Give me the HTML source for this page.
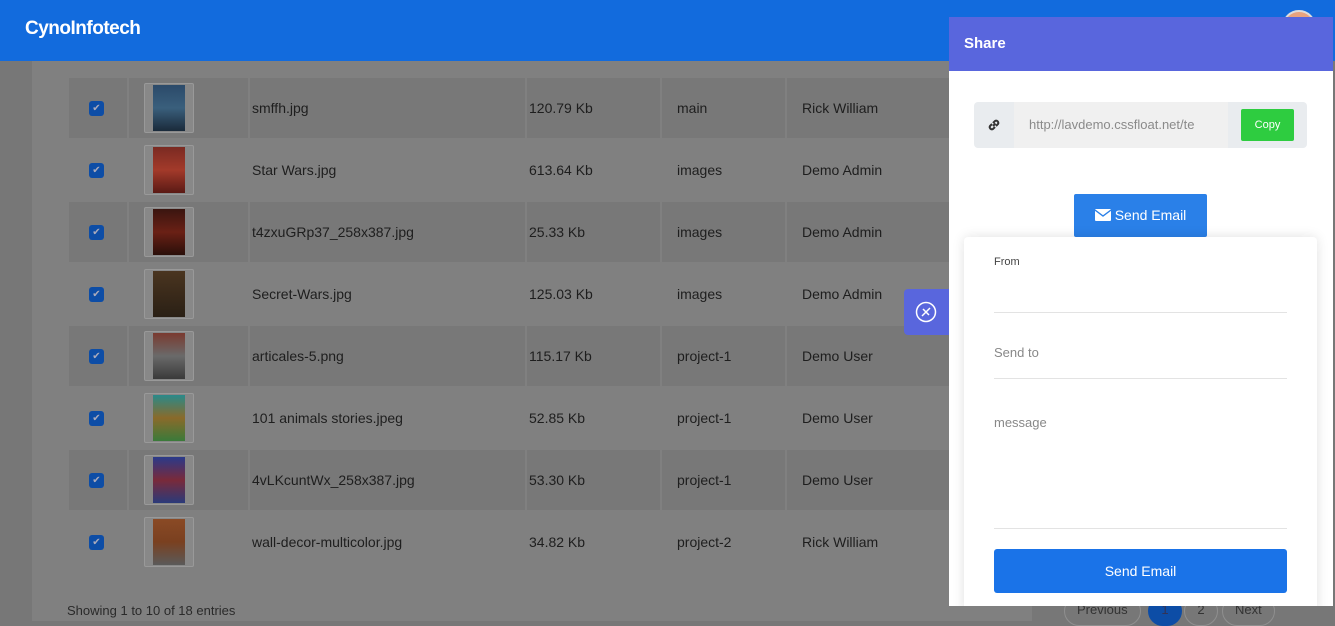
<!DOCTYPE html>
<html><head><meta charset="utf-8"><style>
*{box-sizing:border-box;margin:0;padding:0}
body{width:1335px;height:619px;overflow:hidden;background:#777;font-family:"Liberation Sans",sans-serif;position:relative}
.top{position:absolute;left:0;top:0;width:1335px;height:61px;background:#126bdd;}
.top .brand{position:absolute;left:25px;top:18px;color:#fff;font-size:19px;font-weight:bold;letter-spacing:-0.5px}
.avatar{position:absolute;left:1282px;top:10px;width:34px;height:34px;border-radius:50%;background:#e8a27e;border:2px solid #ddd}
.card{position:absolute;left:32px;top:61px;width:1000px;height:560px;background:#808080}
.row{position:absolute;left:69px;height:60px;width:880px}
.cell{position:absolute;top:0;height:60px;font-size:14px;color:#1e1e1e;line-height:60px}
.row.s .cell{background:#787878}
.cb{position:absolute;left:20px;top:23px;width:15px;height:15px;background:#0d4da6;border-radius:3px;color:#aab;font-size:10px;text-align:center;line-height:15px}
.th{position:absolute;left:15px;top:5px;width:50px;height:50px;border:1px solid #999;border-radius:2px;background:#888}
.th i{position:absolute;left:8px;top:1px;width:32px;height:46px;display:block}
.foot{position:absolute;left:67px;top:603px;font-size:13px;color:#2a2a2a}
.pg{position:absolute;top:596px;height:30px;border:1px solid #8f8f8f;border-radius:15px;font-size:13px;color:#333;line-height:26px;padding:0 12px}
.panel{position:absolute;left:949px;top:17px;width:384px;height:589px;background:#fff;overflow:hidden}
.ph{height:54px;background:#5966dd;color:#fff;font-weight:bold;font-size:15px;line-height:54px;padding-left:15px}
.ig{position:absolute;left:25px;top:85px;width:333px;height:46px;background:#e9ecef;border-radius:4px}
.ig .in{position:absolute;left:40px;top:0;width:214px;height:46px;background:#f0f0f0;color:#8a8a8a;font-size:13px;line-height:46px;padding-left:15px;white-space:nowrap;overflow:hidden}
.copy{position:absolute;left:267px;top:7px;width:53px;height:32px;background:#2ecc40;border-radius:2px;color:#fff;font-size:11px;text-align:center;line-height:32px}
.se{position:absolute;left:125px;top:177px;width:133px;height:43px;background:#2a80e8;border-radius:2px;color:#fff;font-size:14px;text-align:center;line-height:43px}
.fc{position:absolute;left:15px;top:220px;width:353px;height:380px;background:#fff;border-radius:4px;box-shadow:0 0 12px rgba(0,0,0,.12)}
.lbl{position:absolute;left:30px;font-size:13px;color:#888}
.ln{position:absolute;left:30px;width:293px;height:1px;background:#e3e3e3}
.btn{position:absolute;left:30px;top:312px;width:293px;height:44px;background:#1a73e8;border-radius:3px;color:#fff;font-size:14px;text-align:center;line-height:44px}
.close{position:absolute;left:904px;top:289px;width:45px;height:46px;background:#5966dd;border-radius:4px 0 0 4px}
</style></head><body>
<div class="card"></div>
<div class="top"><div class="brand">CynoInfotech</div><div class="avatar"></div></div>

<div class="row s" style="top:78px"><div class="cell" style="left:0;width:58px"><div class="cb">✔</div></div><div class="cell" style="left:60px;width:119px"><div class="th"><i style="background:linear-gradient(#2b4a6a,#3a5f7c,#1a2a3a)"></i></div></div><div class="cell" style="left:181px;width:275px;padding-left:2px">smffh.jpg</div><div class="cell" style="left:458px;width:133px;padding-left:2px">120.79 Kb</div><div class="cell" style="left:593px;width:123px;padding-left:15px">main</div><div class="cell" style="left:718px;width:162px;padding-left:15px">Rick William</div></div>
<div class="row" style="top:140px"><div class="cell" style="left:0;width:58px"><div class="cb">✔</div></div><div class="cell" style="left:60px;width:119px"><div class="th"><i style="background:linear-gradient(#7a2a22,#a33a2a,#5a1a15)"></i></div></div><div class="cell" style="left:181px;width:275px;padding-left:2px">Star Wars.jpg</div><div class="cell" style="left:458px;width:133px;padding-left:2px">613.64 Kb</div><div class="cell" style="left:593px;width:123px;padding-left:15px">images</div><div class="cell" style="left:718px;width:162px;padding-left:15px">Demo Admin</div></div>
<div class="row s" style="top:202px"><div class="cell" style="left:0;width:58px"><div class="cb">✔</div></div><div class="cell" style="left:60px;width:119px"><div class="th"><i style="background:linear-gradient(#3a1510,#6a2015,#2a0f0a)"></i></div></div><div class="cell" style="left:181px;width:275px;padding-left:2px">t4zxuGRp37_258x387.jpg</div><div class="cell" style="left:458px;width:133px;padding-left:2px">25.33 Kb</div><div class="cell" style="left:593px;width:123px;padding-left:15px">images</div><div class="cell" style="left:718px;width:162px;padding-left:15px">Demo Admin</div></div>
<div class="row" style="top:264px"><div class="cell" style="left:0;width:58px"><div class="cb">✔</div></div><div class="cell" style="left:60px;width:119px"><div class="th"><i style="background:linear-gradient(#4a3520,#3a2a1a,#2a2015)"></i></div></div><div class="cell" style="left:181px;width:275px;padding-left:2px">Secret-Wars.jpg</div><div class="cell" style="left:458px;width:133px;padding-left:2px">125.03 Kb</div><div class="cell" style="left:593px;width:123px;padding-left:15px">images</div><div class="cell" style="left:718px;width:162px;padding-left:15px">Demo Admin</div></div>
<div class="row s" style="top:326px"><div class="cell" style="left:0;width:58px"><div class="cb">✔</div></div><div class="cell" style="left:60px;width:119px"><div class="th"><i style="background:linear-gradient(#7a3a30,#6a6a6a,#3a3a3a)"></i></div></div><div class="cell" style="left:181px;width:275px;padding-left:2px">articales-5.png</div><div class="cell" style="left:458px;width:133px;padding-left:2px">115.17 Kb</div><div class="cell" style="left:593px;width:123px;padding-left:15px">project-1</div><div class="cell" style="left:718px;width:162px;padding-left:15px">Demo User</div></div>
<div class="row" style="top:388px"><div class="cell" style="left:0;width:58px"><div class="cb">✔</div></div><div class="cell" style="left:60px;width:119px"><div class="th"><i style="background:linear-gradient(#2a8a8a,#8a6a2a,#3a7a3a)"></i></div></div><div class="cell" style="left:181px;width:275px;padding-left:2px">101 animals stories.jpeg</div><div class="cell" style="left:458px;width:133px;padding-left:2px">52.85 Kb</div><div class="cell" style="left:593px;width:123px;padding-left:15px">project-1</div><div class="cell" style="left:718px;width:162px;padding-left:15px">Demo User</div></div>
<div class="row s" style="top:450px"><div class="cell" style="left:0;width:58px"><div class="cb">✔</div></div><div class="cell" style="left:60px;width:119px"><div class="th"><i style="background:linear-gradient(#2a3a8a,#7a2a3a,#2a3a7a)"></i></div></div><div class="cell" style="left:181px;width:275px;padding-left:2px">4vLKcuntWx_258x387.jpg</div><div class="cell" style="left:458px;width:133px;padding-left:2px">53.30 Kb</div><div class="cell" style="left:593px;width:123px;padding-left:15px">project-1</div><div class="cell" style="left:718px;width:162px;padding-left:15px">Demo User</div></div>
<div class="row" style="top:512px"><div class="cell" style="left:0;width:58px"><div class="cb">✔</div></div><div class="cell" style="left:60px;width:119px"><div class="th"><i style="background:linear-gradient(#8a4a25,#7a4020,#5a5a5a)"></i></div></div><div class="cell" style="left:181px;width:275px;padding-left:2px">wall-decor-multicolor.jpg</div><div class="cell" style="left:458px;width:133px;padding-left:2px">34.82 Kb</div><div class="cell" style="left:593px;width:123px;padding-left:15px">project-2</div><div class="cell" style="left:718px;width:162px;padding-left:15px">Rick William</div></div>

<div class="foot">Showing 1 to 10 of 18 entries</div>
<div class="pg" style="left:1064px">Previous</div>
<div class="pg" style="left:1148px;background:#0d4da6;border-color:#0d4da6;color:#335;width:34px;padding:0;text-align:center">1</div>
<div class="pg" style="left:1184px;width:34px;padding:0;text-align:center">2</div>
<div class="pg" style="left:1222px">Next</div>

<div class="close"><svg width="45" height="46" viewBox="0 0 45 46"><circle cx="22" cy="23" r="9.5" fill="none" stroke="#fff" stroke-width="1.5"/><path d="M18 27 L26 19 M19 20 L25 26" stroke="#fff" stroke-width="1.5"/></svg></div>

<div class="panel">
<div class="ph">Share</div>
<div class="ig"><svg style="position:absolute;left:12px;top:15px" width="16" height="16" viewBox="0 0 16 16"><path d="M7 9 L9.5 6.5 M6 7 L4 9 a2.2 2.2 0 0 0 3 3 L9 10 M10 9 L12 7 a2.2 2.2 0 0 0 -3 -3 L7 6" fill="none" stroke="#333" stroke-width="2"/></svg><div class="in">http://lavdemo.cssfloat.net/te</div><div class="copy">Copy</div></div>
<div class="se"><svg width="16" height="12" viewBox="0 0 16 12" style="vertical-align:-1px;margin-right:4px"><rect width="16" height="12" rx="1" fill="#fff"/><path d="M0 1 L8 7 L16 1" fill="none" stroke="#2a80e8" stroke-width="1.4"/></svg>Send Email</div>
<div class="fc">
<div class="lbl" style="top:19px;font-size:11px;color:#444">From</div>
<div class="ln" style="top:75px"></div>
<div class="lbl" style="top:108px">Send to</div>
<div class="ln" style="top:141px"></div>
<div class="lbl" style="top:178px">message</div>
<div class="ln" style="top:291px"></div>
<div class="btn">Send Email</div>
</div>
</div>
</body></html>
